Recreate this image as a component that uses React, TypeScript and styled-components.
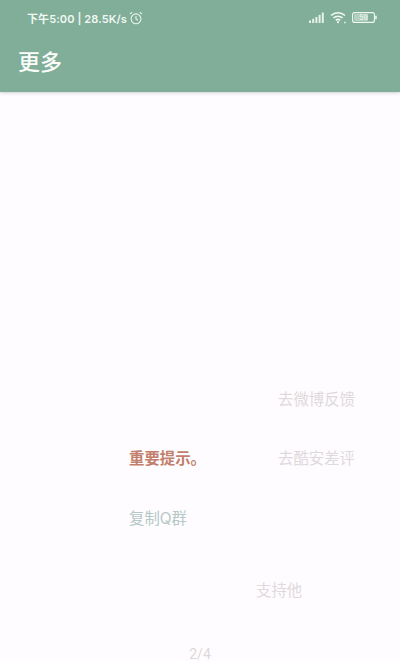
import React from "react";
import styled, { createGlobalStyle } from "styled-components";

const GlobalStyle = createGlobalStyle`
  html, body {
    margin: 0;
    padding: 0;
    background: #fffcff;
  }
  body {
    font-family: "Noto Sans CJK SC", "Noto Sans", sans-serif;
  }
`;

const Page = styled.div`
  width: 400px;
  height: 661px;
  display: flex;
  flex-direction: column;
  overflow: hidden;
  background: #fffcff;
`;

const Header = styled.header`
  height: 92px;
  flex: none;
  display: flex;
  flex-direction: column;
  background: #80ae98;
  box-shadow: 0 1px 3px rgba(90, 110, 100, 0.3);
  color: #fff;
`;

const StatusBar = styled.div`
  height: 35px;
  display: flex;
  align-items: center;
  justify-content: space-between;
  padding: 0 23px 0 27px;
`;

const StatusGroup = styled.div<{ $gap: number }>`
  display: flex;
  align-items: center;
  gap: ${(p) => p.$gap}px;
`;

const StatusText = styled.span`
  font-family: "Inter", "Noto Sans CJK SC", sans-serif;
  font-size: 11px;
  font-weight: 600;
  letter-spacing: 0.1px;
  color: #f1f8f3;
`;

const Toolbar = styled.div`
  flex: 1;
  display: flex;
  align-items: center;
  padding: 0 0 8px 18px;
`;

const Title = styled.h1`
  margin: 0;
  font-size: 22px;
  font-weight: 500;
  line-height: 30px;
  color: #fbfdfb;
`;

const Content = styled.main`
  flex: 1;
  display: flex;
  flex-direction: column;
  padding-top: 293px;
`;

const LinkRow = styled.div<{ $height: number }>`
  height: ${(p) => p.$height}px;
  display: grid;
  grid-template-columns: 129px 149px auto;
  align-items: center;
`;

const Link = styled.span<{ $color: string; $bold?: boolean; $col?: number }>`
  grid-column: ${(p) => p.$col ?? "auto"};
  font-family: "Inter", "Noto Sans CJK SC", sans-serif;
  font-size: 15.4px;
  line-height: 22px;
  white-space: nowrap;
  font-weight: ${(p) => (p.$bold ? 700 : 400)};
  color: ${(p) => p.$color};
`;

const SupportRow = styled.div`
  padding: 43px 0 0 256px;
  line-height: 22px;
  height: 22px;
`;

const Pager = styled.div`
  margin-top: 46px;
  text-align: center;
  font-family: "Roboto", sans-serif;
  font-size: 14px;
  line-height: 16px;
  color: #dcd8da;
`;

const SignalIcon = () => (
  <svg width="16" height="11" viewBox="0 0 16 11" fill="#e6f1ea">
    <rect x="0" y="8.5" width="2" height="2.5" />
    <rect x="3.2" y="6.8" width="2" height="4.2" />
    <rect x="6.4" y="5" width="2" height="6" />
    <rect x="9.6" y="2.8" width="2" height="8.2" />
    <rect x="12.8" y="0.5" width="2" height="10.5" />
  </svg>
);

const WifiIcon = () => (
  <svg width="17" height="13" viewBox="0 0 17 13" fill="none" stroke="#f1f8f3" strokeWidth="1.6">
    <path d="M1 4.5C5 .8 11 .8 15 4.5" />
    <path d="M3.4 7C6 4.6 10 4.6 12.6 7" />
    <path d="M5.8 9.3C7 8.2 9 8.2 10.2 9.3" />
    <circle cx="8" cy="11.2" r="1.1" fill="#f1f8f3" stroke="none" />
    <circle cx="15" cy="11.5" r="1" fill="#d7e8de" stroke="none" />
  </svg>
);

const BatteryIcon = () => (
  <svg width="25" height="11" viewBox="0 0 25 11" fill="none">
    <rect x="0.6" y="0.6" width="21.8" height="9.8" rx="2" stroke="#f1f8f3" strokeWidth="1.1" />
    <rect x="2" y="2" width="14" height="7" rx="1" fill="#dcebe2" opacity="0.55" />
    <rect x="23.2" y="3.5" width="1.5" height="4" rx="0.7" fill="#f1f8f3" />
    <text x="11.5" y="8.2" textAnchor="middle" fontSize="7" fontFamily="Inter, sans-serif" fill="#f1f8f3">
      59
    </text>
  </svg>
);

const AlarmIcon = () => (
  <svg width="14" height="14" viewBox="0 0 14 14" fill="none" stroke="#eaf4ee" strokeWidth="1.1">
    <circle cx="7" cy="7.8" r="4.9" />
    <path d="M7 5v3l1.8 1.2" />
    <path d="M1 3.2 3.2 1.2M13 3.2 10.8 1.2" />
  </svg>
);

export default function App() {
  return (
    <Page>
      <GlobalStyle />
      <Header>
        <StatusBar>
          <StatusGroup $gap={2}>
            <StatusText>下午5:00 | 28.5K/s</StatusText>
            <AlarmIcon />
          </StatusGroup>
          <StatusGroup $gap={5}>
            <SignalIcon />
            <WifiIcon />
            <BatteryIcon />
          </StatusGroup>
        </StatusBar>
        <Toolbar>
          <Title>更多</Title>
        </Toolbar>
      </Header>
      <Content>
        <LinkRow $height={30}>
          <Link $col={3} $color="#dedadb">去微博反馈</Link>
        </LinkRow>
        <LinkRow $height={88}>
          <Link $col={2} $bold $color="#c27f6c">重要提示。</Link>
          <Link $col={3} $color="#dedadb">去酷安差评</Link>
        </LinkRow>
        <LinkRow $height={32}>
          <Link $col={2} $color="#b4c8c6">复制Q群</Link>
        </LinkRow>
        <SupportRow>
          <Link $color="#dedadb">支持他</Link>
        </SupportRow>
        <Pager>2/4</Pager>
      </Content>
    </Page>
  );
}
